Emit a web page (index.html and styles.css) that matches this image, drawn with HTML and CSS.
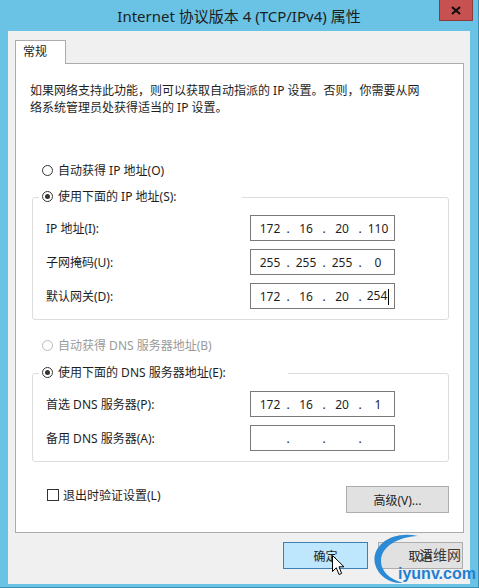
FILE: index.html
```html
<!DOCTYPE html>
<html lang="zh-CN">
<head>
  <meta charset="UTF-8">
  <title>Internet 协议版本 4 (TCP/IPv4) 属性</title>
  <link rel="stylesheet" href="styles.css">
</head>
<body>
  <div class="window">
    <div class="titlebar">
      <span class="title">Internet 协议版本 4 (TCP/IPv4) 属性</span>
      <span class="close">
        <svg width="10" height="9" viewBox="0 0 10 9"><path d="M1 1 L9 8 M9 1 L1 8" stroke="#111" stroke-width="2.2"/></svg>
      </span>
    </div>

    <div class="client">
      <div class="tabs"><div class="tab">常规</div></div>

      <div class="panel">
        <p class="desc">如果网络支持此功能，则可以获取自动指派的 IP 设置。否则，你需要从网<br>络系统管理员处获得适当的 IP 设置。</p>

        <div class="opt opt-first"><span class="rb"></span>自动获得 IP 地址(O)</div>

        <div class="group group-ip">
          <div class="opt group-head head-ip"><span class="rb on"></span>使用下面的 IP 地址(S):</div>
          <div class="row">
            <span class="row-label">IP 地址(I):</span>
            <div class="ipbox"><span class="oct">172</span><span class="sep">.</span><span class="oct">16</span><span class="sep">.</span><span class="oct">20</span><span class="sep">.</span><span class="oct">110</span></div>
          </div>
          <div class="row">
            <span class="row-label">子网掩码(U):</span>
            <div class="ipbox"><span class="oct">255</span><span class="sep">.</span><span class="oct">255</span><span class="sep">.</span><span class="oct">255</span><span class="sep">.</span><span class="oct">0</span></div>
          </div>
          <div class="row">
            <span class="row-label">默认网关(D):</span>
            <div class="ipbox"><span class="oct">172</span><span class="sep">.</span><span class="oct">16</span><span class="sep">.</span><span class="oct">20</span><span class="sep">.</span><span class="oct">254<i class="caret"></i></span></div>
          </div>
        </div>

        <div class="opt opt-disabled"><span class="rb"></span>自动获得 DNS 服务器地址(B)</div>

        <div class="group group-dns">
          <div class="opt group-head head-dns"><span class="rb on"></span>使用下面的 DNS 服务器地址(E):</div>
          <div class="row">
            <span class="row-label">首选 DNS 服务器(P):</span>
            <div class="ipbox"><span class="oct">172</span><span class="sep">.</span><span class="oct">16</span><span class="sep">.</span><span class="oct">20</span><span class="sep">.</span><span class="oct">1</span></div>
          </div>
          <div class="row">
            <span class="row-label">备用 DNS 服务器(A):</span>
            <div class="ipbox"><span class="oct"></span><span class="sep">.</span><span class="oct"></span><span class="sep">.</span><span class="oct"></span><span class="sep">.</span><span class="oct"></span></div>
          </div>
        </div>

        <div class="bottom-row">
          <div class="check"><span class="cb"></span>退出时验证设置(L)</div>
          <div class="btn btn-adv">高级(V)...</div>
        </div>
      </div>

      <div class="dialog-buttons">
        <div class="btn btn-ok">确定</div>
        <div class="btn">取消</div>
      </div>
    </div>

    <!-- watermark + mouse pointer over the buttons -->
    <div class="watermark">
      <svg class="wm-arc" width="60" height="52" viewBox="0 0 60 52">
        <path d="M46 3 C18 -3 -1 14 3 31 C6 43 18 51 31 50 C17 46 9 38 9 28 C9 14 25 4 46 3 Z" fill="#2a8ad6"/>
      </svg>
      <span class="wm-cn">运维网</span>
      <span class="wm-en">iyunv.com</span>
    </div>
    <svg class="pointer" width="13" height="21" viewBox="0 0 13 21">
      <path d="M0.5 0.5 L0.5 16.5 L4.3 12.8 L7 19.5 L9.6 18.4 L7 11.8 L12 11.8 Z" fill="#fff" stroke="#000" stroke-width="1"/>
    </svg>
  </div>
</body>
</html>
```

FILE: styles.css
```css
* {
  box-sizing: border-box;
}
body {
  margin: 0;
  font-family: "Noto Sans", "Noto Sans CJK SC", sans-serif;
  font-size: 12px;
  color: #1e1e1e;
}
.window {
  position: relative;
  width: 479px;
  height: 588px;
  background: #6ac3e4;
  border-right: 1px solid #3b8fb3;
  border-bottom: 1px solid #3b8fb3;
  padding: 0 8px 3px 8px;
  overflow: hidden;
}
.titlebar {
  height: 31px;
  margin: 0 -8px;
  display: grid;
  grid-template-columns: 1fr auto 1fr;
}
.title {
  grid-column: 2;
  align-self: center;
  font-size: 15px;
  color: #1d1d1d;
  white-space: nowrap;
}
.close {
  grid-column: 3;
  justify-self: end;
  align-self: start;
  width: 34px;
  height: 21px;
  margin-right: 5px;
  background: #c75050;
  border: 1px solid #8f3a3a;
  border-top: none;
  display: flex;
  align-items: center;
  justify-content: center;
}
.client {
  height: 553px;
  background: #f0f0f0;
  padding: 9px 7px 0 7px;
}
.tabs {
  display: flex;
  position: relative;
  z-index: 1;
}
.tab {
  width: 51px;
  height: 24px;
  background: #fff;
  border: 1px solid #acacac;
  border-bottom: none;
  padding-left: 7px;
  line-height: 22px;
  margin-bottom: -1px;
}
.panel {
  width: 449px;
  height: 470px;
  background: #fff;
  border: 1px solid #acacac;
}
.desc {
  margin: 0;
  padding: 18px 0 0 14px;
  line-height: 17px;
}
.opt {
  display: flex;
  align-items: center;
  gap: 5px;
  height: 20px;
}
.opt-first {
  margin: 44px 0 0 26px;
}
.opt-disabled {
  margin: 15px 0 0 26px;
  color: #9a9a9a;
}
.opt-disabled .rb {
  border-color: #bcbcbc;
}
.rb {
  flex: none;
  width: 11px;
  height: 11px;
  border: 1px solid #333;
  border-radius: 50%;
  background: #fff;
  display: flex;
  align-items: center;
  justify-content: center;
}
.rb.on::after {
  content: "";
  width: 5px;
  height: 5px;
  border-radius: 50%;
  background: #333;
}
.group {
  margin: 17px 14px 0 16px;
  border: 1px solid #dcdcdc;
  border-radius: 3px;
  padding: 0 0 10px 13px;
}
.group-dns {
  margin-top: 18px;
}
.group-head {
  margin: -12px 0 9px -7px;
  padding-left: 3px;
  background: #fff;
}
.head-ip {
  width: 203px;
}
.head-dns {
  width: 249px;
}
.row {
  display: flex;
  align-items: center;
  height: 26px;
}
.row + .row {
  margin-top: 8px;
}
.row-label {
  width: 204px;
}
.ipbox {
  width: 145px;
  height: 26px;
  border: 1px solid #7a7a7a;
  background: #fff;
  padding-left: 4px;
  display: flex;
  align-items: center;
}
.oct {
  width: 30px;
  text-align: center;
}
.sep {
  width: 6px;
  text-align: center;
}
.caret {
  display: inline-block;
  width: 1px;
  height: 16px;
  margin-left: 1px;
  background: #000;
  vertical-align: middle;
}
.bottom-row {
  display: flex;
  justify-content: space-between;
  align-items: flex-start;
  margin: 24px 14px 0 31px;
}
.check {
  display: flex;
  align-items: center;
  gap: 4px;
  height: 17px;
}
.cb {
  width: 12px;
  height: 12px;
  border: 1px solid #333;
  background: #fff;
}
.btn {
  width: 85px;
  height: 27px;
  background: #e1e1e1;
  border: 1px solid #adadad;
  display: flex;
  align-items: center;
  justify-content: center;
}
.btn-adv {
  width: 103px;
}
.btn-ok {
  background: #bee6fd;
  border-color: #3c7fb1;
}
.dialog-buttons {
  display: flex;
  justify-content: flex-end;
  gap: 10px;
  margin-top: 9px;
}
.watermark {
  position: absolute;
  left: 372px;
  top: 533px;
  width: 107px;
  height: 52px;
}
.wm-arc {
  position: absolute;
  left: 0;
  top: 0;
}
.wm-cn {
  position: absolute;
  left: 47px;
  top: 15px;
  font-size: 14px;
  line-height: 14px;
  color: #3a3a3a;
}
.wm-en {
  position: absolute;
  left: 26px;
  top: 33px;
  font-family: "Liberation Sans", sans-serif;
  font-weight: bold;
  font-size: 16px;
  line-height: 16px;
  color: #1f7fd4;
}
.pointer {
  position: absolute;
  left: 332px;
  top: 555px;
}
```
